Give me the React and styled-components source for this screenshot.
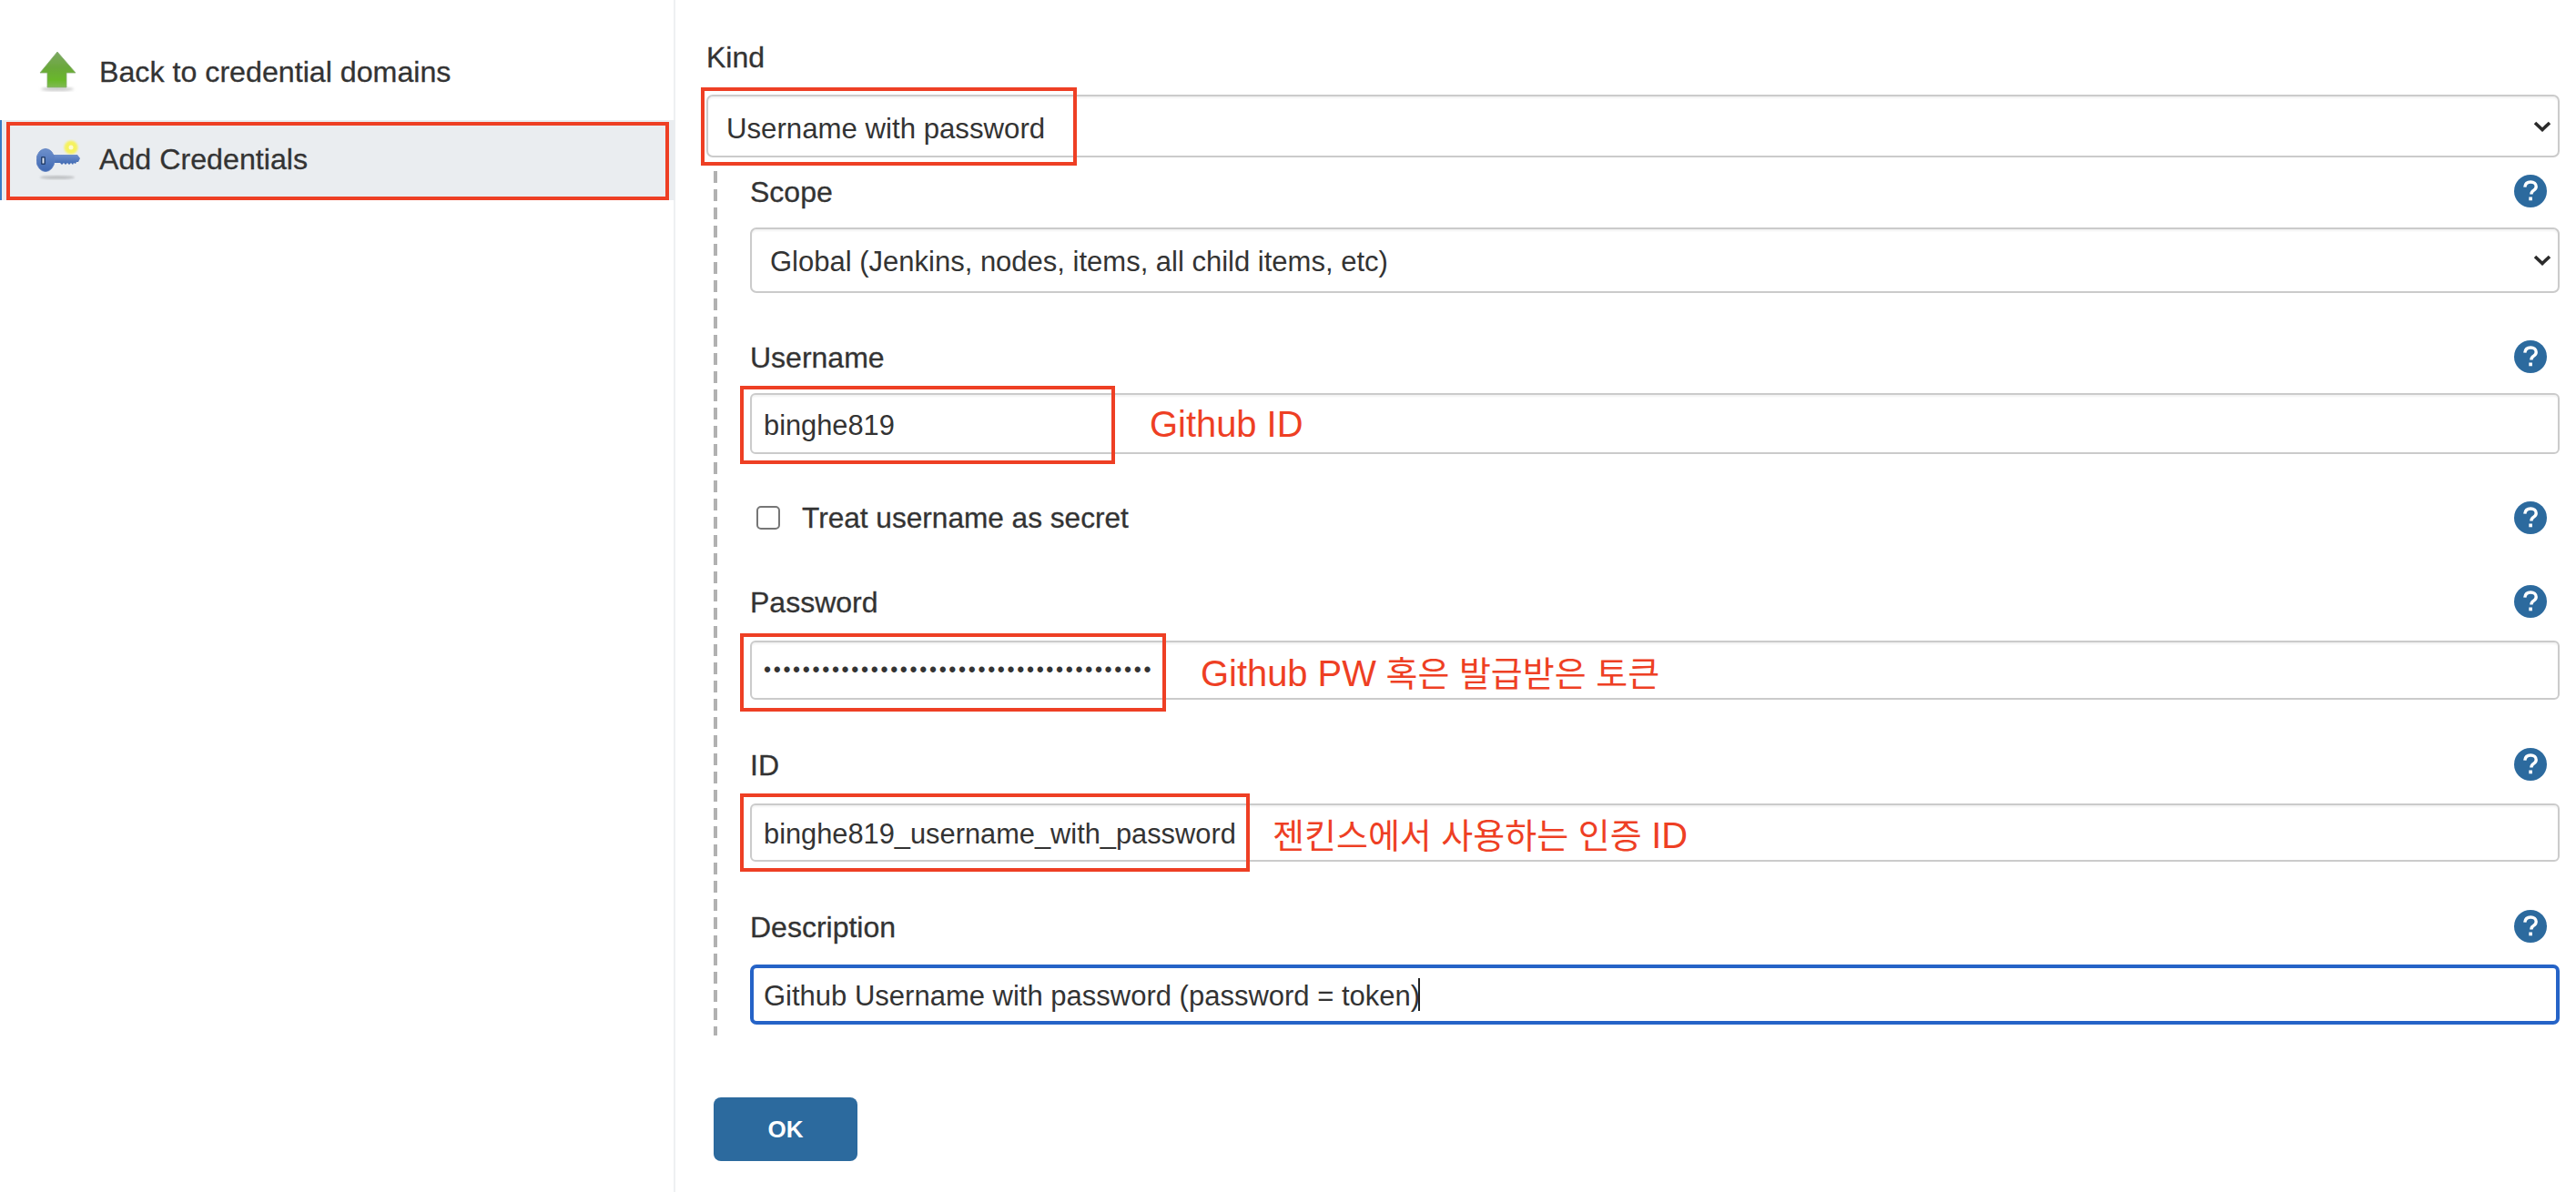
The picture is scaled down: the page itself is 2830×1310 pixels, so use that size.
import React from 'react';
import styled, { createGlobalStyle } from 'styled-components';

const GlobalStyle = createGlobalStyle`
  * {
    box-sizing: border-box;
  }
  body {
    margin: 0;
    background: #fff;
    color: #333;
    font-family: "Liberation Sans", "Noto Sans CJK KR", sans-serif;
  }
`;

const RED = '#ee3f24';
const BLUE = '#2c6a9e';

const Page = styled.div`
  display: flex;
  width: 2830px;
  height: 1310px;
  overflow: hidden;
`;

const Sidebar = styled.aside`
  flex: 0 0 742px;
  padding-top: 35px;
  border-right: 2px solid #eef0f2;
`;

const TaskRow = styled.div`
  position: relative;
  display: flex;
  align-items: center;
  gap: 21px;
  height: 88px;
  margin-bottom: 9px;
  padding-left: 40px;
  font-size: 32.2px;
  -webkit-text-stroke: 0.3px #333;
  background: ${(p) => (p.$active ? '#eaedf0' : 'transparent')};
  border-left: ${(p) => (p.$active ? '2px solid #3a7cc4' : 'none')};
  margin-right: ${(p) => (p.$active ? '-2px' : '0')};
  ${(p) => p.$active && 'padding-left: 38px;'}
`;

const TaskText = styled.span`
  padding-bottom: ${(p) => (p.$active ? 2 : 0)}px;
`;

const TaskIcon = styled.svg`
  flex: 0 0 48px;
  width: 48px;
  height: 48px;
`;

const RedBox = styled.div`
  position: absolute;
  left: ${(p) => p.$left}px;
  top: ${(p) => p.$top}px;
  bottom: ${(p) => p.$bottom}px;
  width: ${(p) => (p.$width ? `${p.$width}px` : 'auto')};
  right: ${(p) => (p.$width ? 'auto' : `${p.$right}px`)};
  border: 4px solid ${RED};
  pointer-events: none;
`;

const Main = styled.main`
  flex: 1;
  padding: 45px 18px 0 34px;
`;

const TopLabel = styled.div`
  height: 36px;
  line-height: 36px;
  font-size: 32px;
  -webkit-text-stroke: 0.3px #333;
  margin-bottom: 23px;
`;

const FieldWrap = styled.div`
  position: relative;
`;

const Select = styled.select`
  display: block;
  width: 100%;
  height: ${(p) => p.$h}px;
  padding: ${(p) => p.$shift}px 20px 0;
  appearance: none;
  background: #fff;
  border: 2px solid #cbcbcb;
  border-radius: 7px;
  box-shadow: inset 0 2px 2px rgba(0, 0, 0, 0.05);
  color: #333;
  font: ${(p) => p.$size}px "Liberation Sans", sans-serif;
  outline: none;
`;

const Chevron = styled.svg`
  position: absolute;
  right: 9px;
  top: 50%;
  width: 20px;
  height: 12px;
  transform: translateY(-50%);
  pointer-events: none;
`;

const Nested = styled.div`
  margin: 15px 0 0 8px;
  padding: 4px 0 12px 40px;
  background: repeating-linear-gradient(to bottom, #b1b1b1 0 13px, transparent 13px 20px) left top / 4px 100% no-repeat;
`;

const LabelRow = styled.div`
  display: flex;
  align-items: center;
  justify-content: space-between;
  height: 36px;
  padding-right: 14px;
  margin-top: ${(p) => p.$top || 0}px;
  margin-bottom: ${(p) => p.$bottom || 0}px;
`;

const Label = styled.label`
  padding-top: 3px;
  font-size: 32px;
  -webkit-text-stroke: 0.3px #333;
`;

const HelpIcon = styled.svg`
  flex: 0 0 36px;
  width: 36px;
  height: 36px;
`;

const Input = styled.input`
  display: block;
  width: 100%;
  height: ${(p) => p.$h}px;
  padding: 4px 12px 0 13px;
  background: #fff;
  border: 2px solid #cbcbcb;
  border-radius: 6px;
  box-shadow: inset 0 2px 2px rgba(0, 0, 0, 0.05);
  color: #333;
  font: 30.8px "Liberation Sans", sans-serif;
  outline: none;
`;

const PasswordInput = styled(Input)`
  padding-top: 0;
  font-size: 23px;
  letter-spacing: 2.65px;
`;

const FocusedInput = styled.div`
  display: flex;
  align-items: center;
  height: 66px;
  padding: 3px 10px 0 11px;
  background: #fff;
  border: 4px solid #2563c7;
  border-radius: 7px;
  color: #333;
  font-size: 31px;
  white-space: pre;
`;

const Caret = styled.span`
  display: inline-block;
  width: 2px;
  height: 36px;
  margin: -3px 0 0 -2px;
  background: #222;
`;

const Note = styled.span`
  position: absolute;
  left: ${(p) => p.$left}px;
  top: 50%;
  transform: translateY(-50%);
  color: ${RED};
  font-size: 38px;
  white-space: nowrap;
  pointer-events: none;
`;

const NoteLatin = styled.span`
  font-size: 39.9px;
`;

const CheckRow = styled.div`
  display: flex;
  align-items: center;
  height: 36px;
  margin-top: 52px;
  padding: 0 14px 0 7px;
`;

const CheckBox = styled.span`
  flex: 0 0 26px;
  width: 26px;
  height: 26px;
  border: 2px solid #767676;
  border-radius: 5px;
  background: #fff;
`;

const CheckLabel = styled.label`
  flex: 1;
  margin-left: 24px;
  font-size: 31.6px;
  -webkit-text-stroke: 0.3px #333;
`;

const OkButton = styled.button`
  display: block;
  width: 158px;
  height: 70px;
  margin: 68px 0 0 8px;
  border: none;
  border-radius: 8px;
  background: ${BLUE};
  color: #fff;
  font: bold 26px "Liberation Sans", sans-serif;
`;

const Help = () => (
  <HelpIcon viewBox="0 0 36 36">
    <circle cx="18" cy="18" r="18" fill={BLUE} />
    <path d="M11.8 13.6c.4-3.6 3-5.6 6.4-5.6 3.500 0 6 2 6 5 0 2.200-1.200 3.300-2.900 4.400-1.700 1.100-2.400 2-2.400 4" fill="none" stroke="#fff" strokeWidth="3.400" />
    <rect x="16.300" y="24.500" width="3.600" height="3.800" fill="#fff" />
  </HelpIcon>
);

const Arrow = () => (
  <Chevron viewBox="0 0 20 12">
    <path d="M2 2l8 7.500L18 2" fill="none" stroke="#2b2b2b" strokeWidth="3.600" />
  </Chevron>
);

const ArrowUpIcon = () => (
  <TaskIcon viewBox="0 0 48 48">
    <defs>
      <linearGradient id="up" x1="0" y1="0" x2="0" y2="1">
        <stop offset="0" stopColor="#7da863" />
        <stop offset="0.45" stopColor="#6aa83a" />
        <stop offset="0.8" stopColor="#69b82a" />
        <stop offset="1" stopColor="#80bb52" />
      </linearGradient>
      <filter id="soft">
        <feGaussianBlur stdDeviation="1.500" />
      </filter>
      <filter id="edge">
        <feGaussianBlur stdDeviation="0.400" />
      </filter>
    </defs>
    <ellipse cx="23" cy="43" rx="18" ry="2" fill="#c9c9c9" filter="url(#soft)" />
    <path d="M23 2L43 25H33V41H12V25H4Z" fill="url(#up)" stroke="#86ad70" strokeWidth="0.800" filter="url(#edge)" />
  </TaskIcon>
);

const KeyIcon = () => (
  <TaskIcon viewBox="0 0 48 48">
    <defs>
      <linearGradient id="keyBlue" x1="0" y1="0" x2="0" y2="1">
        <stop offset="0" stopColor="#6e90cc" />
        <stop offset="1" stopColor="#3f68b2" />
      </linearGradient>
      <filter id="glow">
        <feGaussianBlur stdDeviation="0.900" />
      </filter>
      <filter id="keyEdge">
        <feGaussianBlur stdDeviation="0.400" />
      </filter>
    </defs>
    <ellipse cx="23" cy="43" rx="19" ry="2" fill="#c0c2c5" filter="url(#glow)" />
    <circle cx="38" cy="10" r="7.500" fill="#f6f25e" filter="url(#glow)" />
    <circle cx="38" cy="10" r="2.500" fill="#fdfbd0" />
    <g filter="url(#keyEdge)">
      <path d="M18 18h27l3 4-2 4h-2l-1 2-2-1-1 2-2-2-2 2-2-2-2 2-2-2-2 2-2-2H18Z" fill="url(#keyBlue)" />
      <ellipse cx="10" cy="24" rx="10" ry="12.500" fill="url(#keyBlue)" stroke="#5d7fc0" strokeWidth="0.800" />
      <rect x="5" y="20" width="5" height="9" rx="1.200" fill="#24406f" />
      <rect x="6.500" y="21.500" width="2" height="6" fill="#dfe6f2" />
    </g>
  </TaskIcon>
);

export default function App() {
  return (
    <Page>
      <GlobalStyle />
      <Sidebar>
        <TaskRow>
          <ArrowUpIcon />
          <TaskText>Back to credential domains</TaskText>
        </TaskRow>
        <TaskRow $active>
          <KeyIcon />
          <TaskText $active>Add Credentials</TaskText>
          <RedBox $left={5} $right={7} $top={2} $bottom={0} />
        </TaskRow>
      </Sidebar>
      <Main>
        <TopLabel>Kind</TopLabel>
        <FieldWrap>
          <Select $h={69} $shift={5} $size={31.2}>
            <option>Username with password</option>
          </Select>
          <Arrow />
          <RedBox $left={-6} $width={413} $top={-8} $bottom={-9} />
        </FieldWrap>
        <Nested>
          <LabelRow $bottom={22}>
            <Label>Scope</Label>
            <Help />
          </LabelRow>
          <FieldWrap>
            <Select $h={72} $shift={3} $size={31}>
              <option>Global (Jenkins, nodes, items, all child items, etc)</option>
            </Select>
            <Arrow />
          </FieldWrap>

          <LabelRow $top={52} $bottom={22}>
            <Label>Username</Label>
            <Help />
          </LabelRow>
          <FieldWrap>
            <Input $h={67} readOnly value="binghe819" />
            <RedBox $left={-11} $width={412} $top={-8} $bottom={-11} />
            <Note $left={439}><NoteLatin>Github ID</NoteLatin></Note>
          </FieldWrap>

          <CheckRow>
            <CheckBox />
            <CheckLabel>Treat username as secret</CheckLabel>
            <Help />
          </CheckRow>

          <LabelRow $top={56} $bottom={25}>
            <Label>Password</Label>
            <Help />
          </LabelRow>
          <FieldWrap>
            <PasswordInput $h={65} type="password" readOnly value="1234567890123456789012345678901234567890" />
            <RedBox $left={-11} $width={468} $top={-8} $bottom={-13} />
            <Note $left={495}><NoteLatin>Github PW</NoteLatin> 혹은 발급받은 토큰</Note>
          </FieldWrap>

          <LabelRow $top={53} $bottom={25}>
            <Label>ID</Label>
            <Help />
          </LabelRow>
          <FieldWrap>
            <Input $h={64} readOnly value="binghe819_username_with_password" />
            <RedBox $left={-11} $width={560} $top={-11} $bottom={-11} />
            <Note $left={574}>젠킨스에서 사용하는 인증 <NoteLatin>ID</NoteLatin></Note>
          </FieldWrap>

          <LabelRow $top={53} $bottom={24}>
            <Label>Description</Label>
            <Help />
          </LabelRow>
          <FocusedInput>
            Github Username with password (password = token)
            <Caret />
          </FocusedInput>
        </Nested>
        <OkButton>OK</OkButton>
      </Main>
    </Page>
  );
}
